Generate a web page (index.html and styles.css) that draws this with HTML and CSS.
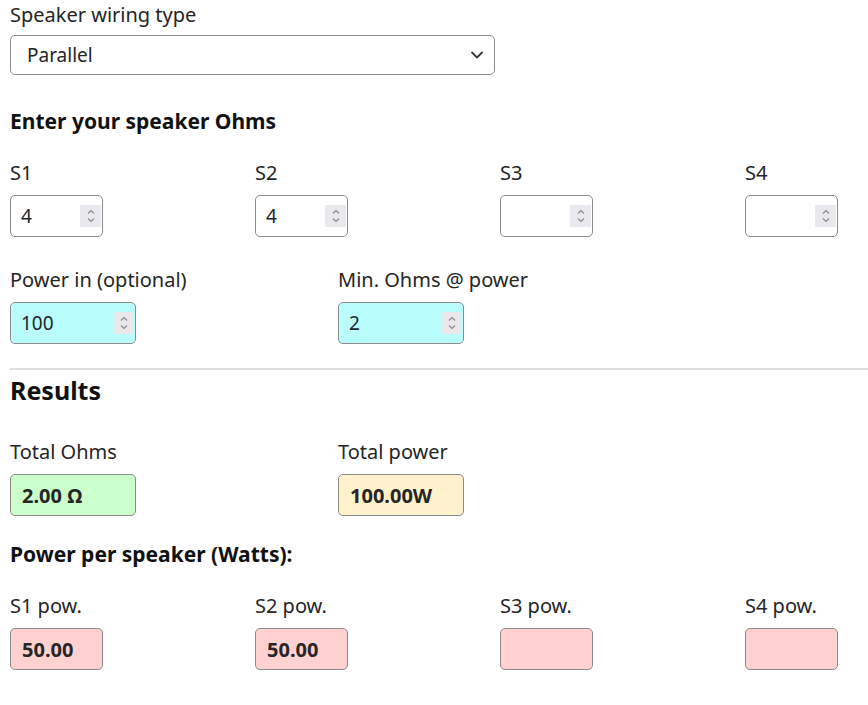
FILE: index.html
```html
<!DOCTYPE html>
<html lang="en">
<head>
<meta charset="utf-8">
<title>Speaker wiring calculator</title>
<link rel="stylesheet" href="styles.css">
</head>
<body>
<div class="page">
  <label class="lbl" for="wiring">Speaker wiring type</label>
  <div class="select-box">
    <select id="wiring" class="select"><option>Parallel</option><option>Series</option></select>
    <svg class="chev" width="14" height="10" viewBox="0 0 14 10"><path d="M2 2.5 L7 7.5 L12 2.5" fill="none" stroke="#343a40" stroke-width="1.8" stroke-linecap="round" stroke-linejoin="round"/></svg>
  </div>

  <h3 class="sub first">Enter your speaker Ohms</h3>
  <div class="grid4">
    <div class="cell"><label class="lbl">S1</label>
      <div class="num small"><input class="val" type="text" value="4"><span class="spin"><svg width="10" height="18" viewBox="0 0 10 18"><path d="M2 6.5 L5 3.5 L8 6.5 M2 11.5 L5 14.5 L8 11.5" fill="none" stroke="#8a8a8a" stroke-width="1.2"/></svg></span></div></div>
    <div class="cell"><label class="lbl">S2</label>
      <div class="num small"><input class="val" type="text" value="4"><span class="spin"><svg width="10" height="18" viewBox="0 0 10 18"><path d="M2 6.5 L5 3.5 L8 6.5 M2 11.5 L5 14.5 L8 11.5" fill="none" stroke="#8a8a8a" stroke-width="1.2"/></svg></span></div></div>
    <div class="cell"><label class="lbl">S3</label>
      <div class="num small"><input class="val" type="text" value=""><span class="spin"><svg width="10" height="18" viewBox="0 0 10 18"><path d="M2 6.5 L5 3.5 L8 6.5 M2 11.5 L5 14.5 L8 11.5" fill="none" stroke="#8a8a8a" stroke-width="1.2"/></svg></span></div></div>
    <div class="cell"><label class="lbl">S4</label>
      <div class="num small"><input class="val" type="text" value=""><span class="spin"><svg width="10" height="18" viewBox="0 0 10 18"><path d="M2 6.5 L5 3.5 L8 6.5 M2 11.5 L5 14.5 L8 11.5" fill="none" stroke="#8a8a8a" stroke-width="1.2"/></svg></span></div></div>
  </div>

  <div class="grid3 row2">
    <div class="cell"><label class="lbl">Power in (optional)</label>
      <div class="num wide cyan"><input class="val" type="text" value="100"><span class="spin"><svg width="10" height="18" viewBox="0 0 10 18"><path d="M2 6.5 L5 3.5 L8 6.5 M2 11.5 L5 14.5 L8 11.5" fill="none" stroke="#8a8a8a" stroke-width="1.2"/></svg></span></div></div>
    <div class="cell"><label class="lbl">Min. Ohms @ power</label>
      <div class="num wide cyan"><input class="val" type="text" value="2"><span class="spin"><svg width="10" height="18" viewBox="0 0 10 18"><path d="M2 6.5 L5 3.5 L8 6.5 M2 11.5 L5 14.5 L8 11.5" fill="none" stroke="#8a8a8a" stroke-width="1.2"/></svg></span></div></div>
  </div>

  <hr class="rule">
  <h2 class="results">Results</h2>

  <div class="grid3 row3">
    <div class="cell"><label class="lbl">Total Ohms</label>
      <div class="out wide green">2.00 Ω</div></div>
    <div class="cell"><label class="lbl">Total power</label>
      <div class="out wide yellow">100.00W</div></div>
  </div>

  <h3 class="sub second">Power per speaker (Watts):</h3>
  <div class="grid4">
    <div class="cell"><label class="lbl">S1 pow.</label><div class="out small pink">50.00</div></div>
    <div class="cell"><label class="lbl">S2 pow.</label><div class="out small pink">50.00</div></div>
    <div class="cell"><label class="lbl">S3 pow.</label><div class="out small pink"></div></div>
    <div class="cell"><label class="lbl">S4 pow.</label><div class="out small pink"></div></div>
  </div>
</div>
</body>
</html>
```
FILE: styles.css
```css
html, body {
  margin: 0;
  padding: 0;
  overflow: hidden;
  background: #fff;
}
body {
  font-family: "Noto Sans", "Open Sans", sans-serif;
  font-size: 20px;
  color: #252525;
}
.page {
  width: 980px;
  padding: 0 10px;
}
.lbl {
  display: block;
  line-height: 30px;
  height: 30px;
}
.select-box {
  margin-top: 5px;
  width: 485px;
  height: 40px;
  box-sizing: border-box;
  border: 1px solid #8f8f8f;
  border-radius: 5px;
  display: flex;
  align-items: center;
  padding: 0 10px 0 16px;
}
.select {
  appearance: none;
  -webkit-appearance: none;
  border: none;
  background: transparent;
  font: inherit;
  font-size: 19px;
  color: #212529;
  flex: 1;
  padding: 0;
  outline: none;
}
.chev { flex: none; }

.sub {
  font-size: 21px;
  font-weight: 700;
  color: #111;
  margin: 0;
  line-height: 30px;
}
.sub.first { margin-top: 31px; }
.sub.second { margin-top: 23px; }

.grid4 {
  display: grid;
  grid-template-columns: repeat(4, 245px);
  margin-top: 22px;
}
.grid3 {
  display: grid;
  grid-template-columns: repeat(3, 328px);
}
.row2 { margin-top: 28px; }
.row3 { margin-top: 27px; }

.cell .lbl { margin-bottom: 7px; }

.num, .out {
  height: 42px;
  box-sizing: border-box;
  border: 1px solid #8a8a8a;
  border-radius: 5px;
  display: flex;
  align-items: center;
}
.small { width: 93px; }
.wide { width: 126px; }

.num { padding: 0 1px 0 10px; }
.val {
  flex: 1;
  min-width: 0;
  border: none;
  background: transparent;
  font: inherit;
  font-size: 19px;
  color: #212529;
  padding: 0;
  outline: none;
}
.spin {
  flex: none;
  width: 21px;
  height: 22px;
  background: #e9e9ed;
  display: flex;
  align-items: center;
  justify-content: center;
}
.cyan { background: #b9fdfd; }
.out {
  padding: 0 11px;
  font-weight: 700;
  color: #262626;
}
.green { background: #cbffcb; }
.yellow { background: #fff2cc; }
.pink { background: #ffd1d1; }

.rule {
  border: none;
  border-top: 2px solid #e0e0e0;
  margin: 24px -10px 0 0;
}
.results {
  font-size: 25px;
  font-weight: 700;
  color: #111;
  margin: 0;
  line-height: 40px;
}
```
